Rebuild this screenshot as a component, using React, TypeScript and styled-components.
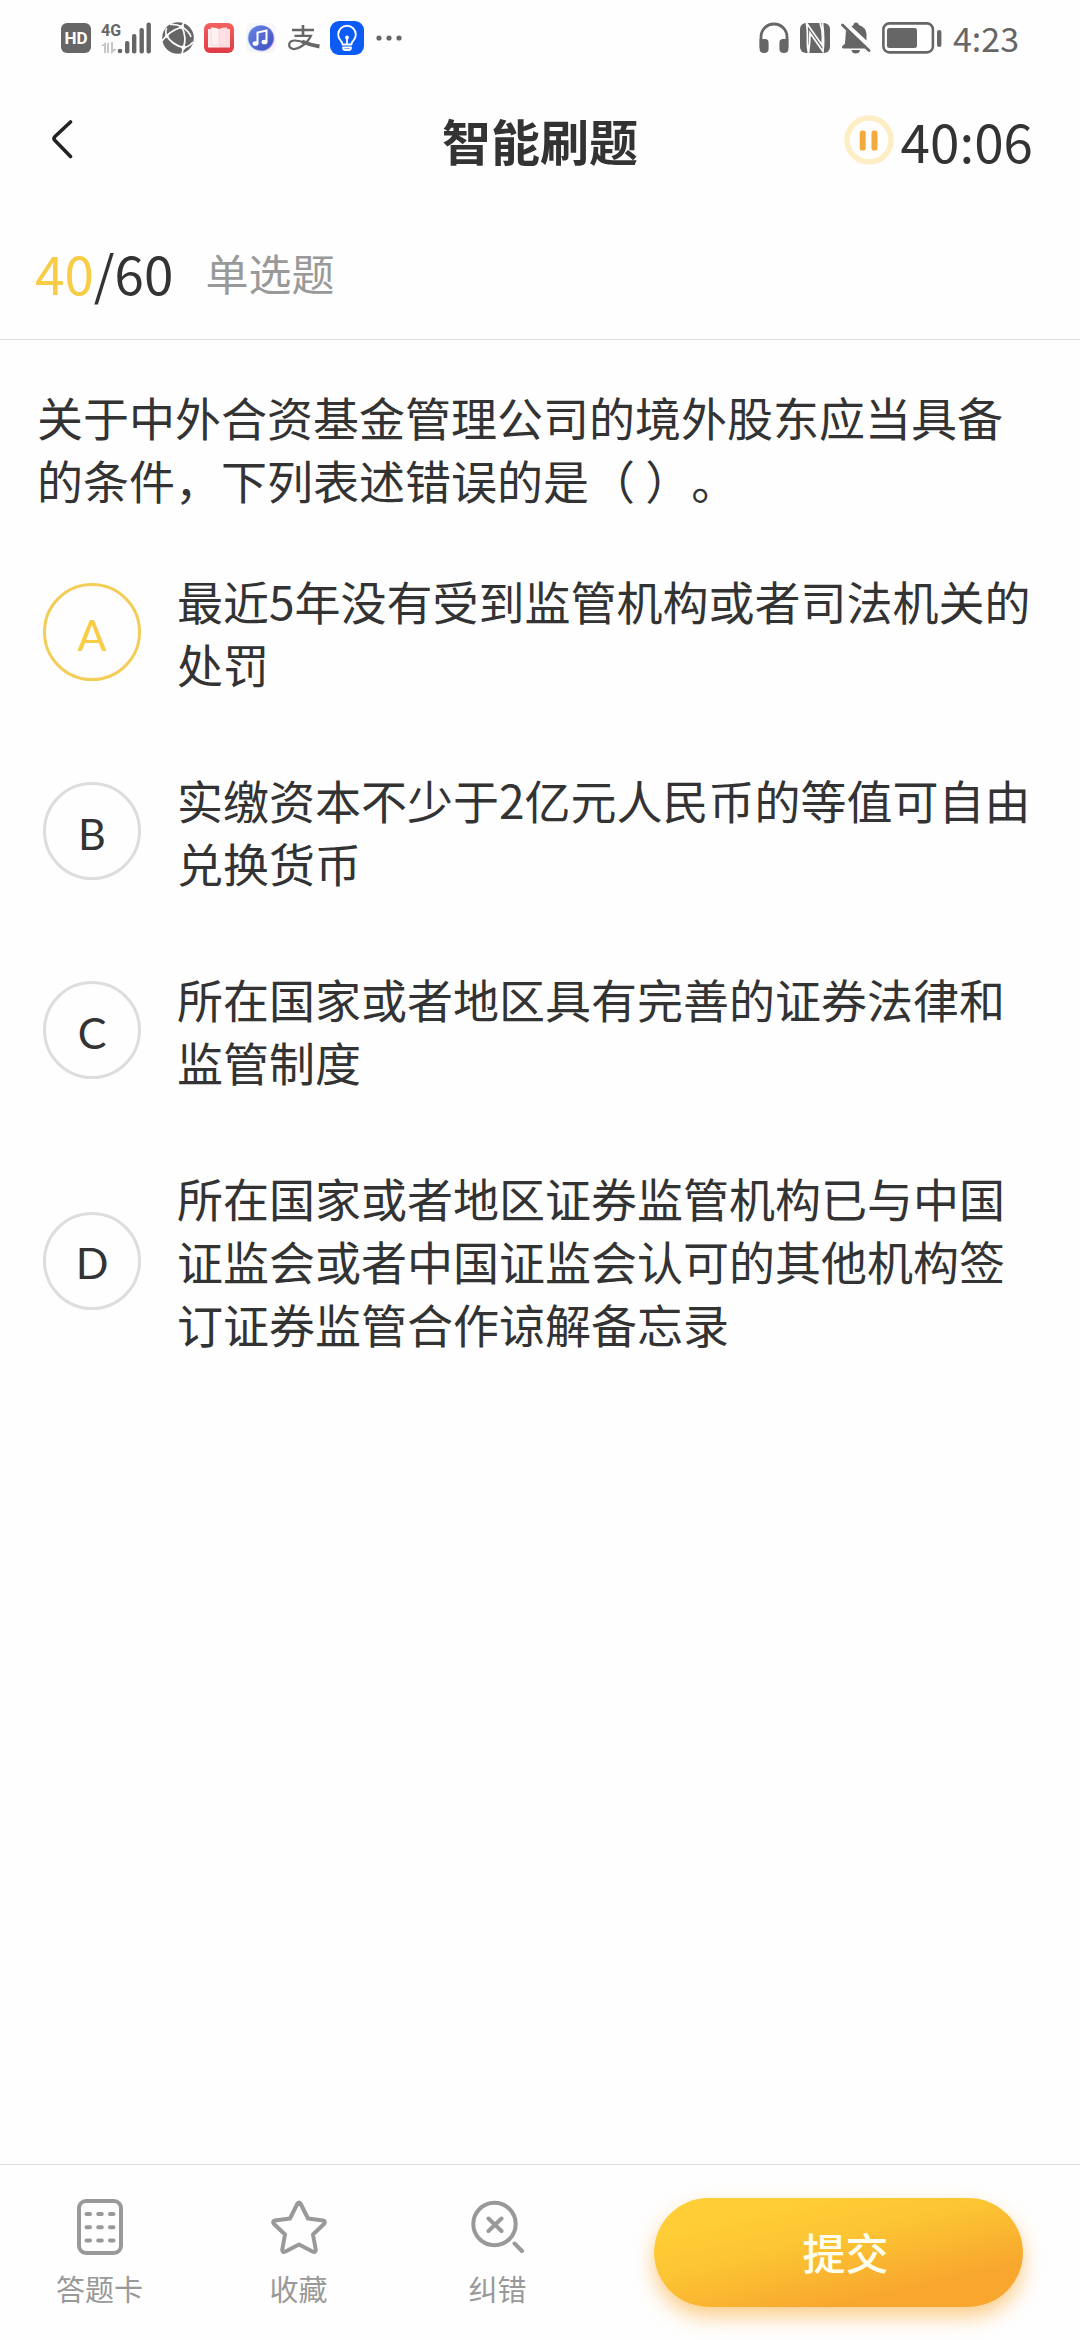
import React, { useState } from "react";
import styled, { createGlobalStyle } from "styled-components";

const INK = "#333333";
const MUTED = "#999999";
const STATUS = "#666666";
const ACCENT = "#f8cc45";
const LINE = "#dddddd";

const GlobalStyle = createGlobalStyle`
  * { box-sizing: border-box; }
  body {
    margin: 0;
    background: #fefefe;
    color: ${INK};
    font-family: "Noto Sans CJK SC", sans-serif;
    text-spacing-trim: space-all;
  }
  button {
    margin: 0;
    padding: 0;
    border: 0;
    background: none;
    color: inherit;
    font: inherit;
    cursor: pointer;
  }
  svg { display: block; flex: none; }
`;

const Page = styled.div`
  display: flex;
  flex-direction: column;
  min-height: 100vh;
`;

const StatusBar = styled.div`
  display: flex;
  justify-content: space-between;
  align-items: center;
  height: 76px;
  padding: 0 61px;
  color: ${STATUS};
`;

const StatusGroup = styled.div<{ $gap: number }>`
  display: flex;
  align-items: center;
  gap: ${(p) => p.$gap}px;
`;

const Clock = styled.time`
  font-size: 34px;
  line-height: 36px;
`;

const Header = styled.header`
  display: grid;
  grid-template-columns: 1fr auto 1fr;
  align-items: center;
  height: 132px;
  padding: 0 47px 4px;
`;

const BackButton = styled.button`
  justify-self: start;
`;

const Title = styled.h1`
  margin: 0;
  font-size: 49px;
  font-weight: 700;
  line-height: 64px;
`;

const Timer = styled.div`
  display: flex;
  justify-self: end;
  align-items: center;
  gap: 7px;
`;

const Figures = styled.span`
  font-size: 53px;
  line-height: 64px;
`;

const Progress = styled.div`
  display: flex;
  align-items: center;
  gap: 32px;
  height: 132px;
  padding: 0 35px 4px;
  border-bottom: 1px solid ${LINE};
`;

const Current = styled.span`
  color: ${ACCENT};
`;

const Kind = styled.span`
  color: ${MUTED};
  font-size: 43px;
  line-height: 64px;
`;

const Question = styled.main`
  flex: 1;
  padding: 45px 37px;
  font-size: 46px;
  line-height: 63px;
`;

const Stem = styled.p`
  margin: 0 0 58px;
`;

const Options = styled.div`
  display: flex;
  flex-direction: column;
  gap: 73px;
`;

const Option = styled.label`
  display: grid;
  grid-template-columns: 98px 1fr;
  align-items: center;
  column-gap: 36px;
  padding-left: 6px;
  cursor: pointer;
`;

const Radio = styled.input`
  grid-area: 1 / 1;
  appearance: none;
  width: 98px;
  height: 98px;
  margin: 0;
  border: 3px solid ${LINE};
  border-radius: 50%;
  cursor: pointer;

  &:checked { border-color: #f3cd58; }
`;

const Letter = styled.span`
  grid-area: 1 / 1;
  justify-self: center;
  padding-top: 4px;
  font-family: Lato, sans-serif;
  font-size: 43px;

  ${Radio}:checked + & { color: ${ACCENT}; }
`;

const OptionText = styled.span`
  grid-area: 1 / 2;
`;

const Footer = styled.footer`
  position: sticky;
  bottom: 0;
  display: grid;
  grid-template-columns: 199fr 199fr 199fr 483fr;
  align-items: center;
  height: 176px;
  border-top: 1px solid ${LINE};
  background: #fefefe;
`;

const Tool = styled.button`
  display: flex;
  flex-direction: column;
  align-items: center;
  gap: 16px;
  padding-bottom: 2px;
  color: ${MUTED};
  font-size: 29px;
  line-height: 34px;
`;

const Submit = styled.button`
  justify-self: center;
  width: 369px;
  height: 109px;
  padding: 0 0 4px 14px;
  border-radius: 55px;
  background: linear-gradient(167deg, #ffcd35 20%, #fcc433 42%, #f8a62e 78%);
  box-shadow: 0 10px 20px rgba(250, 167, 46, 0.55);
  color: #fffff0;
  font-size: 43px;
  font-weight: 500;
`;

const HdIcon = () => (
  <svg width="30" height="30" viewBox="0 0 30 30">
    <rect width="30" height="30" rx="6" fill={STATUS} />
    <text x="15" y="21" textAnchor="middle" fontFamily="Roboto, sans-serif" fontSize="17" fontWeight="700" fill="#fff">HD</text>
  </svg>
);

const SignalIcon = () => (
  <svg width="51" height="44" viewBox="0 -6 51 44" fill={STATUS}>
    <text x="0" y="14" fontFamily="Roboto, sans-serif" fontSize="16" fontWeight="700">4G</text>
    <path d="M5 20v11H3v-7H0zM8 20v11H6v-9zM10 20h2v7h4l-6 5z" fill="#c6c6c6" />
    <circle cx="19" cy="29" r="2.3" />
    <rect x="24" y="19" width="4.4" height="12.5" rx="2" />
    <rect x="31" y="12" width="4.4" height="19.5" rx="2" />
    <rect x="38.500" y="6" width="4.400" height="25.500" rx="2" />
    <rect x="45.500" y="0.500" width="4.400" height="31" rx="2" />
  </svg>
);

const GlobeIcon = () => (
  <svg width="32" height="32" viewBox="0 0 32 32">
    <circle cx="16" cy="16" r="15.800" fill={STATUS} />
    <g fill="none" stroke="#fefefe" strokeWidth="1.700">
      <path d="M8 2.500Q15 2 20 5Q27 9 29 15" />
      <path d="M20 5Q25 16 21.500 25.500" />
      <path d="M20 5Q7 9 0 19" />
      <path d="M4.500 13.500Q10 23 21.500 25.500Q27 25 31 20" />
      <path d="M4.500 13.500Q3 10 4.500 6" />
      <path d="M21.500 25.500L20 32M20 5L22 0" />
    </g>
    <circle cx="20" cy="5" r="2.200" fill="#fefefe" />
    <circle cx="4.800" cy="14" r="2" fill="#fefefe" />
    <circle cx="21.500" cy="25.500" r="2.200" fill="#fefefe" />
  </svg>
);

const BookIcon = () => (
  <svg width="30" height="30" viewBox="0 0 30 30">
    <defs>
      <linearGradient id="book" x1="0" y1="0" x2="0" y2="1">
        <stop offset="0" stopColor="#f0625f" />
        <stop offset="1" stopColor="#df3a44" />
      </linearGradient>
    </defs>
    <rect width="30" height="30" rx="6" fill="url(#book)" />
    <path d="M4 6H7V4.500Q12 4 15 6V24.500H4z" fill="#fff0f1" />
    <path d="M15 6Q18 4 23 4.500V6H26V24.500H15z" fill="#fde0e3" />
    <path d="M7 5V22.500H13L15 24.500L17 22.500H23V5M15 6V24" fill="none" stroke="#f7cdd1" strokeWidth="0.600" />
  </svg>
);

const MusicIcon = () => (
  <svg width="34" height="30" viewBox="-2 0 34 30">
    <defs>
      <linearGradient id="music" x1="0" y1="0" x2="1" y2="1">
        <stop offset="0" stopColor="#6a83e6" />
        <stop offset="1" stopColor="#3d4fbd" />
      </linearGradient>
    </defs>
    <rect width="30" height="30" rx="6" fill="#f7f6fb" />
    <circle cx="15.500" cy="15.500" r="13" fill="#e0a8ee" />
    <circle cx="14.500" cy="15" r="13" fill="#a9e2f5" />
    <circle cx="15" cy="15" r="12.600" fill="url(#music)" />
    <path d="M11.500 20V9.500L20.500 7.500V18.500" fill="none" stroke="#fff" strokeWidth="2" />
    <ellipse cx="9.500" cy="20.500" rx="3" ry="2.300" fill="#fff" />
    <ellipse cx="18.500" cy="19" rx="3" ry="2.300" fill="#fff" />
  </svg>
);

const AlipayIcon = () => (
  <svg width="32" height="26" viewBox="0 0 32 26" fill="none" stroke={STATUS}>
    <path d="M4 5H26M15 0V11" strokeWidth="2.600" />
    <path d="M6.500 10.800H23Q20 17 14 21Q9 24.500 5 24Q0.800 23 1.200 19Q2 15.500 7 15.500Q12 15.500 18 18.500" strokeWidth="2.200" />
    <path d="M14 16.500Q22 20 31.500 21.500" strokeWidth="4" />
  </svg>
);

const BulbIcon = () => (
  <svg width="34" height="34" viewBox="0 0 34 34">
    <rect width="34" height="34" rx="9" fill="#0d5bf5" />
    <g fill="none" stroke="#fff" strokeWidth="1.800" strokeLinecap="round" strokeLinejoin="round">
      <path d="M12.500 23.500Q12.500 21 10.500 19.500A8.800 8.800 0 1 1 23.500 19.500Q21.500 21 21.500 23.500zM13 26.500Q13 29 15 29H19Q21 29 21 26.500z" />
      <path d="M17 17V23" />
    </g>
    <circle cx="17" cy="16.500" r="1.900" fill="#fff" />
  </svg>
);

const MoreIcon = () => (
  <svg width="28" height="6" viewBox="0 0 28 6" fill={STATUS}>
    <circle cx="5" cy="3" r="2.600" />
    <circle cx="15" cy="3" r="2.600" />
    <circle cx="25" cy="3" r="2.600" />
  </svg>
);

const HeadphonesIcon = () => (
  <svg width="30" height="32" viewBox="0 0 30 32">
    <path d="M2 26V15A13 13 0 0 1 28 15V26" fill="none" stroke={STATUS} strokeWidth="2.800" />
    <path d="M0.600 17H6Q9.600 17 9.600 21V27Q9.600 31 5 31Q0.600 31 0.600 27zM29.400 17H24Q20.400 17 20.400 21V27Q20.400 31 25 31Q29.400 31 29.400 27z" fill={STATUS} />
  </svg>
);

const NfcIcon = () => (
  <svg width="30" height="30" viewBox="0 0 30 30">
    <rect width="30" height="30" rx="6" fill={STATUS} />
    <path d="M8.500 30Q7 24 7.500 15Q7.500 6 6.500 0L22 22Q23.500 9 20 0M8.500 30Q10 20 10 10L23 28.500Q24.500 16 22.500 0" fill="none" stroke="#fefefe" strokeWidth="1.700" />
  </svg>
);

const MutedBellIcon = () => (
  <svg width="30" height="32" viewBox="0 0 30 32" fill={STATUS}>
    <path d="M5 8L25 26.500H2Q0.500 26 1 24.500L4 21.500zM10.500 4.500Q11.500 3.500 12.500 3Q12.500 0.500 15 0.500Q17.500 0.500 18 3Q25 5.500 25.500 12V18.500zM10.500 28H19Q18.500 31.500 14.800 31.500Q11 31.500 10.500 28z" />
    <path d="M1.500 3L28 28.500" fill="none" stroke={STATUS} strokeWidth="2.800" strokeLinecap="round" />
    <path d="M6 3.500L28.500 25" fill="none" stroke="#fefefe" strokeWidth="2" />
  </svg>
);

const BatteryIcon = () => (
  <svg width="60" height="32" viewBox="0 0 60 32" fill={STATUS}>
    <rect x="1.400" y="1.400" width="49.500" height="29" rx="6" fill="none" stroke={STATUS} strokeWidth="2.600" />
    <rect x="5" y="6" width="30" height="20" rx="2.500" />
    <rect x="55" y="8" width="4.400" height="17" rx="2.200" />
  </svg>
);

const BackIcon = () => (
  <svg width="30" height="40" viewBox="0 0 30 40" fill="none" stroke="#222" strokeWidth="3.600" strokeLinecap="round">
    <path d="M23.500 2L8 16.500Q6 18.500 8 20.500L23.500 36.500" />
  </svg>
);

const PauseIcon = () => (
  <svg width="50" height="50" viewBox="0 0 50 50">
    <circle cx="25" cy="25" r="22" fill="none" stroke="#fdeec6" strokeWidth="5.500" />
    <rect x="15.700" y="15.500" width="6" height="20" rx="2.600" fill="#f2aa3c" />
    <rect x="27.500" y="15.500" width="6" height="20" rx="2.600" fill="#f2aa3c" />
  </svg>
);

const CardIcon = () => (
  <svg width="56" height="56" viewBox="0 0 56 56" fill="none" stroke={MUTED} strokeWidth="4">
    <rect x="7" y="2" width="42" height="52" rx="7" />
    <path d="M14.500 15H18M26.200 15H29.800M38 15H41.500M14.500 28.200H18M26.200 28.200H29.800M38 28.200H41.500M14.500 41.500H18M26.200 41.500H29.800M38 41.500H41.500" strokeLinecap="round" />
  </svg>
);

const StarIcon = () => (
  <svg width="56" height="56" viewBox="0 0 56 56" fill="none" stroke={MUTED} strokeWidth="4" strokeLinejoin="round">
    <path d="M26.500 4.500Q28 2.500 29.500 4.500L37 19.500L52 21.500Q55 22.500 53 25L42 35.500L44.800 51Q44.500 54 41.500 52.500L28 45.500L14.500 52.500Q11.500 54 11.200 51L14 35.500L3 25Q1 22.500 4 21.500L19 19.500z" />
  </svg>
);

const ReportIcon = () => (
  <svg width="56" height="56" viewBox="0 0 56 56" fill="none" stroke={MUTED} strokeWidth="4" strokeLinecap="round">
    <circle cx="24.500" cy="25" r="21.200" />
    <path d="M18.500 19.500L31.500 32M31.500 19.500L18.500 32M44.500 44.500L52 52" />
  </svg>
);

const OPTIONS = [
  { id: "A", text: "最近5年没有受到监管机构或者司法机关的处罚" },
  { id: "B", text: "实缴资本不少于2亿元人民币的等值可自由兑换货币" },
  { id: "C", text: "所在国家或者地区具有完善的证券法律和监管制度" },
  { id: "D", text: "所在国家或者地区证券监管机构已与中国证监会或者中国证监会认可的其他机构签订证券监管合作谅解备忘录" },
];

const TOOLS = [
  { label: "答题卡", Icon: CardIcon },
  { label: "收藏", Icon: StarIcon },
  { label: "纠错", Icon: ReportIcon },
];

export default function App() {
  const [answer, setAnswer] = useState("A");

  return (
    <Page>
      <GlobalStyle />
      <StatusBar>
        <StatusGroup $gap={10}>
          <HdIcon />
          <SignalIcon />
          <GlobeIcon />
          <BookIcon />
          <MusicIcon />
          <AlipayIcon />
          <BulbIcon />
          <MoreIcon />
        </StatusGroup>
        <StatusGroup $gap={11}>
          <HeadphonesIcon />
          <NfcIcon />
          <MutedBellIcon />
          <BatteryIcon />
          <Clock>4:23</Clock>
        </StatusGroup>
      </StatusBar>

      <Header>
        <BackButton type="button">
          <BackIcon />
        </BackButton>
        <Title>智能刷题</Title>
        <Timer>
          <button type="button">
            <PauseIcon />
          </button>
          <Figures>40:06</Figures>
        </Timer>
      </Header>

      <Progress>
        <Figures>
          <Current>40</Current>/60
        </Figures>
        <Kind>单选题</Kind>
      </Progress>

      <Question>
        <Stem>关于中外合资基金管理公司的境外股东应当具备的条件，下列表述错误的是（ ）。</Stem>
        <Options role="radiogroup">
          {OPTIONS.map(({ id, text }) => (
            <Option key={id}>
              <Radio
                type="radio"
                name="answer"
                value={id}
                checked={answer === id}
                onChange={() => setAnswer(id)}
              />
              <Letter>{id}</Letter>
              <OptionText>{text}</OptionText>
            </Option>
          ))}
        </Options>
      </Question>

      <Footer>
        {TOOLS.map(({ label, Icon }) => (
          <Tool key={label} type="button">
            <Icon />
            {label}
          </Tool>
        ))}
        <Submit type="button">提交</Submit>
      </Footer>
    </Page>
  );
}
